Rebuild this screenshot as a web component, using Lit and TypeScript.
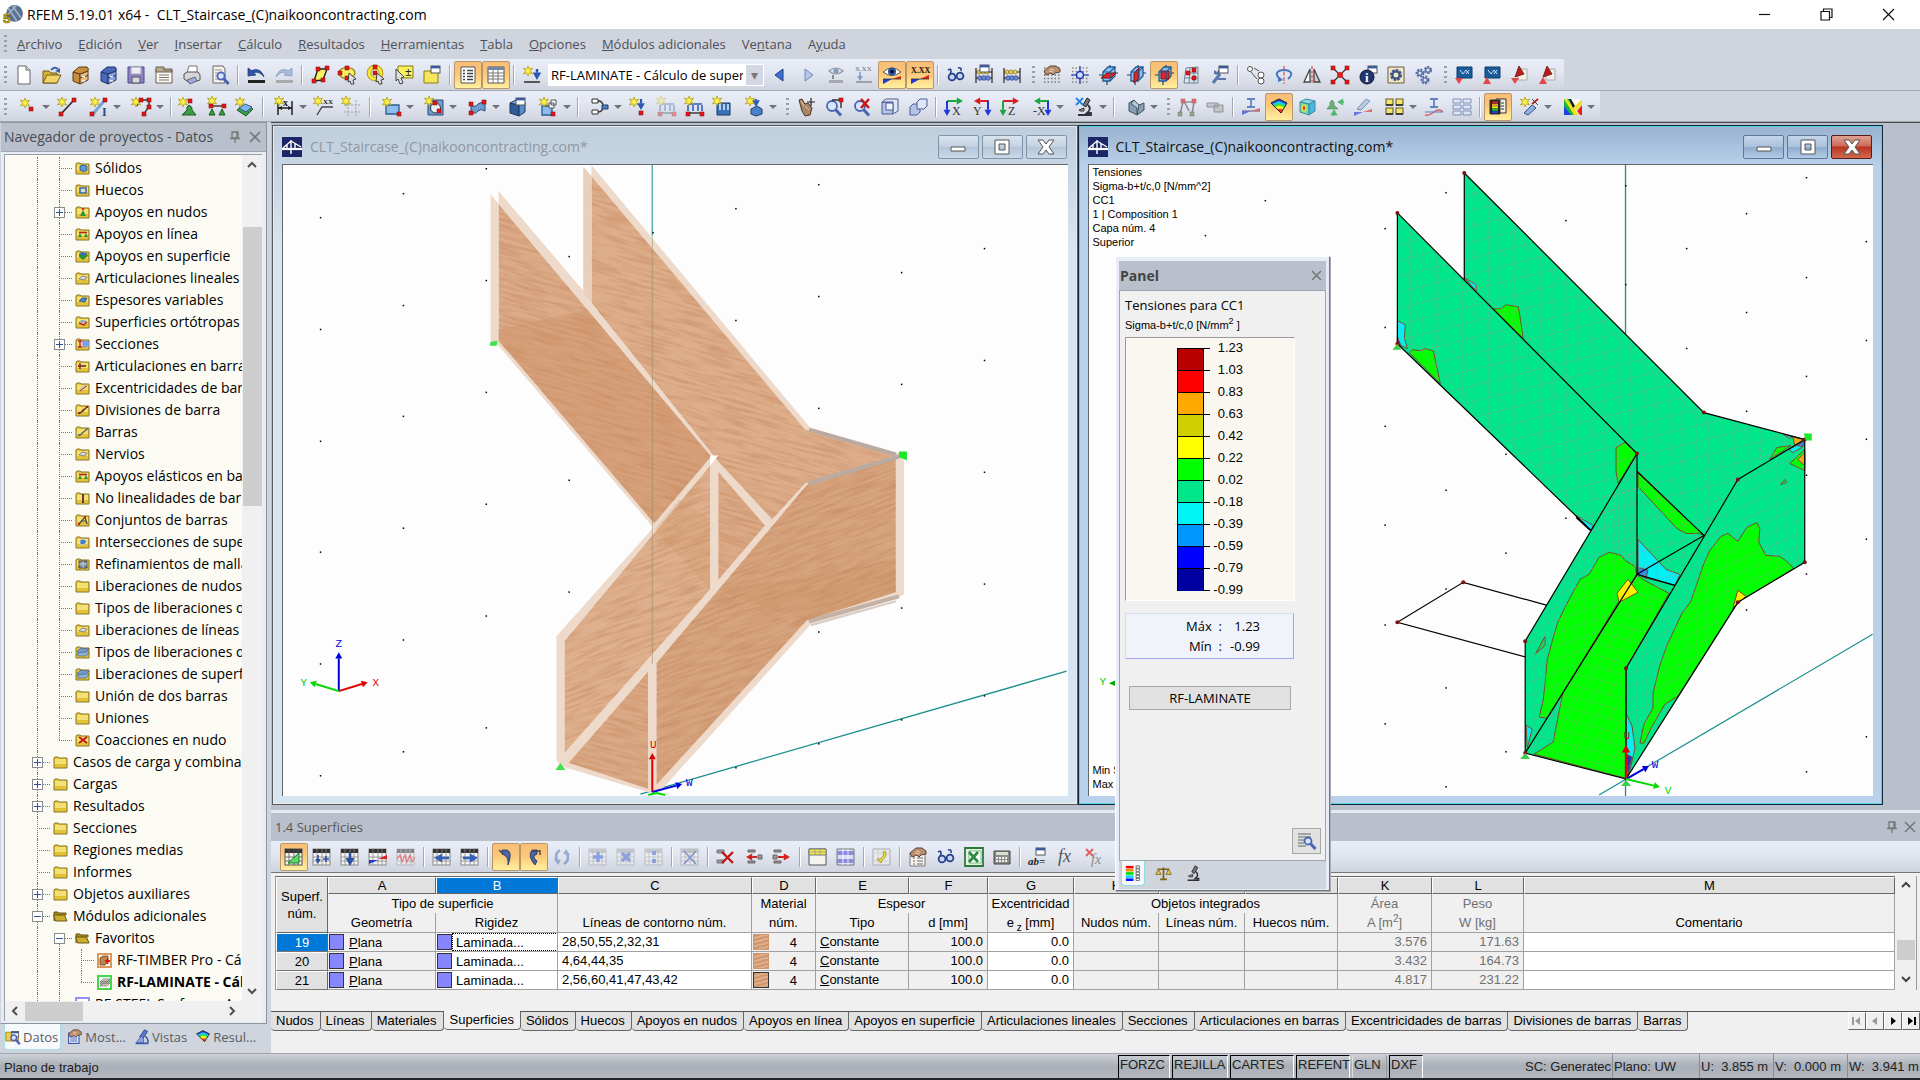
import { LitElement, html, svg, css, nothing } from 'lit';
import { customElement, property } from 'lit/decorators.js';
import { classMap } from 'lit/directives/class-map.js';

/* ---------- small drawing helpers ---------- */
const p = (d: string, f = 'none', s = 'none', w = 1) =>
  svg`<path d=${d} fill=${f} stroke=${s} stroke-width=${w}></path>`;
const ln = (d: string, s = '#222', w = 1.4) => p(d, 'none', s, w);
const star = (x = 5, y = 5) => svg`<path transform="translate(${x} ${y})"
  d="M0-5L1.3-1.8 4.6-3 2.4 0 4.6 3 1.3 1.8 0 5-1.3 1.8-4.6 3-2.4 0-4.6-3-1.3-1.8Z" fill="#fff04a" stroke="#a89600" stroke-width=".7"></path>`;
const nd = (x: number, y: number, c = '#e81414') =>
  svg`<rect x=${x - 2} y=${y - 2} width="4" height="4" fill=${c} stroke="#7a0a0a" stroke-width=".5"></rect>`;
const tx = (t: string, x: number, y: number, s = 9, c = '#222', b = '700', st = 'normal') =>
  svg`<text x=${x} y=${y} font-size=${s} fill=${c} font-weight=${b} font-style=${st} font-family="Liberation Serif, serif">${t}</text>`;
const arr = (x1: number, y1: number, x2: number, y2: number, c: string, w = 2) => {
  const a = Math.atan2(y2 - y1, x2 - x1), h = w * 2.2;
  const bx = x2 - h * 1.4 * Math.cos(a), by = y2 - h * 1.4 * Math.sin(a);
  const px = -Math.sin(a) * h * 0.8, py = Math.cos(a) * h * 0.8;
  return svg`<path d="M${x1} ${y1}L${bx} ${by}" stroke=${c} stroke-width=${w}></path>
    <path d="M${x2} ${y2}L${bx + px} ${by + py}L${bx - px} ${by - py}Z" fill=${c}></path>`;
};
const gridIcon = (c = '#555', head = '#333') => svg`
  <rect x="1" y="2" width="17" height="16" fill="#f4f4f2" stroke=${c}></rect>
  <rect x="1" y="2" width="17" height="4" fill=${head}></rect>
  <path d="M1 10H18M1 14H18M5 2V18M10 2V18M14 2V18" stroke=${c} stroke-width=".8"></path>`;
const miniWin = (x: number, y: number) => svg`<rect x=${x} y=${y} width="9" height="7" fill="#fff" stroke="#555"></rect>
  <rect x=${x} y=${y} width="9" height="2.4" fill="#3a5a9c"></rect>`;
const cabinet = (a: string, b: string, c: string) => svg`
  ${p('M3 7L10 9V19L3 16Z', a, c)}${p('M10 9L18 6V15L10 19Z', b, c)}${p('M3 7L9 2L17 2Q19 3 18 6L10 9Z', a, c)}
  ${ln('M10 13L18 10.500', c, 1)}${p('M12 11h3v1.500h-3zM12 15h3v1.500h-3z', '#eee')}`;
const glasses = svg`${p('M2 5Q5 3 5 6L4 11', 'none', '#25408c', 1.6)}${p('M12 3Q16 2 15 6', 'none', '#25408c', 1.6)}
  <circle cx="6" cy="12" r="3.400" fill="#c9d5ee" stroke="#25408c" stroke-width="1.800"></circle>
  <circle cx="14" cy="11" r="3.400" fill="#c9d5ee" stroke="#25408c" stroke-width="1.800"></circle>`;
const abacus = svg`${ln('M2 3V18M18 3V18', '#555', 1.6)}${ln('M2 7H18M2 13H18', '#222', 1)}
  ${[5, 9, 13].map(x => svg`<circle cx=${x} cy="7" r="2" fill="#ecd350" stroke="#86711a" stroke-width=".7"></circle>`)}
  ${[6, 10, 14].map(x => svg`<circle cx=${x} cy="13" r="2.300" fill="#6c8ad6" stroke="#243f8c" stroke-width=".7"></circle>`)}`;
const dots = (c = '#777') => svg`${[3, 6.5, 10, 13.5, 17].map(y => svg`<path d="M2 ${y}H19" stroke=${c} stroke-width="1.500" stroke-dasharray="1.500 2"></path>`)}`;
const hand = svg`${p('M2 6L8 1H14L18 4V7L13 8L11 10L9 8L4 10Z', '#b98f6e', '#5f4330', 1)}${ln('M8 4L12 5M7 6L11 7', '#ecd2b8', 1)}`;
const lens = (x = 9, y = 8, r = 5) => svg`<circle cx=${x} cy=${y} r=${r} fill="#d7e5fb" stroke="#4a64b4" stroke-width="1.800"></circle>
  <path d="M${x + r * 0.7} ${y + r * 0.7}L${x + r + 4} ${y + r + 4.5}" stroke="#4a64b4" stroke-width="3"></path>`;
const plane = (f: string) => svg`${p('M5 7L10 2H17V11L12 16H5Z', '#8fc2ee', '#1d5a94', 1.3)}${p('M1 10H5M17 8H20M9 16V20M12 2V0', 'none', '#1d4676', 1.2)}${p(f, '#e02626', '#801010')}
  ${ln('M5 7H12V16M12 7L17 2', '#1d5a94', 1.1)}`;
const micro = svg`${p('M12 1L15 3L11 10L8 8Z', '#777', '#222')}${p('M3 18H16V16H12Q17 12 13 8', 'none', '#333', 1.8)}${p('M4 13L9 11V14H5Z', '#999', '#333')}`;
const rainbow = svg`${p('M2 6L10 2L18 6L12 16Z', '#2040e0')}${p('M3 7L10 4L17 7L12 16Z', '#18c8f0')}${p('M4 8.500L10 6.500L16 8.500L12 16Z', '#38e040')}
  ${p('M6 10L10 8.500L15 10L12 16Z', '#f8f020')}${p('M8 12L13.500 12L12 16Z', '#f03020')}${p('M2 6L10 2L18 6L12 16Z', 'none', '#222', 1)}`;
const axes = (l: string, c1: string, c2: string, flip = false) => svg`
  ${flip ? arr(17, 4, 2, 4, c1, 2) : arr(3, 4, 19, 4, c1, 2)}${flip ? arr(16, 4, 16, 19, c2, 2) : arr(3, 4, 3, 19, c2, 2)}
  ${tx(l, flip ? 1 : 8, 18, 12, '#333', '400')}`;
const flag = (c: string, up: boolean) => svg`${c === 'b'
    ? p('M3 2H18V13H3Z', '#175b9c', '#0d3c6b') : p('M8 4H17V15H8Z', '#f2efe6', '#aaa')}
  ${c === 'b' ? ln('M6 5L9 9L12 5L15 9M12 9L15 5', '#cde2fa', 1) : p('M5 12L9 1L14 9Z', '#b81c1c', '#701010', 0.8)}
  ${up ? p('M5 12L9 19H1Z', '#e24848') : p('M1 13H9L5 19Z', '#e24848')}`;

const icons: Record<string, unknown> = {
  new: svg`${p('M4 1H12L16 5V19H4Z', '#fff', '#666')}${p('M12 1V5H16', '#ddd', '#666')}`,
  open: svg`${p('M1 18V6H7L9 8H15V18Z', '#d4b23a', '#6f5a12')}${p('M1 18L5 10H19L15 18Z', '#f0d468', '#6f5a12')}${p('M9 5Q13 1 16 4', 'none', '#3f64a4', 1.8)}${p('M18 3L18 8L13 6Z', '#3f64a4')}`,
  cab: cabinet('#c88f42', '#e6bd7c', '#5f3c10'),
  cabBlue: cabinet('#4a68b8', '#88a2e0', '#20336f'),
  save: svg`${p('M2 2H18V18H2Z', '#8a82c4', '#4b4690')}${p('M5 2H15V9H5Z', '#eeeaf6', '#aaa')}${p('M6 12H14V18H6Z', '#d8d8e0', '#555')}`,
  report: svg`${p('M2 4H18V18H2Z', '#fbf8ef', '#6c614e')}${p('M2 2H10V5H18V7H2Z', '#b7a98e', '#6c614e')}${ln('M5 10H15M5 12.500H15M5 15H15', '#777', 1)}`,
  print: svg`${p('M5 8L7 1H15L15 8Z', '#fff', '#777')}${p('M2 9L5 7H16L18 10V15L8 18L2 14Z', '#d4d4da', '#555')}${p('M5 15L13 12L15 16L8 19Z', '#9aaee0', '#555', 0.8)}`,
  preview: svg`${p('M3 1H13L15 4V18H3Z', '#f4f2ea', '#666')}${ln('M5 5H12M5 8H8M5 11H8M5 14H9', '#999', 1)}${lens(11, 11, 3.6)}`,
  undo: svg`${p('M2 3L2 11L10 10L7.500 8Q13 5.500 18 12Q15 2 5.500 5.500Z', '#2f55a8', '#1a3570', 0.7)}${p('M2 15H19V18H2Z', '#222')}`,
  redo: svg`${p('M18 3L18 11L10 10L12.500 8Q7 5.500 2 12Q5 2 14.500 5.500Z', '#a9bbdc', '#8094ba', 0.7)}${p('M2 15H19V18H2Z', '#aaa')}`,
  selPoly: svg`${p('M4 16L8 4H17L13 15Z', '#f8f060', '#222', 1.4)}${nd(8, 4)}${nd(4, 16)}${nd(13, 15)}${nd(17, 3)}`,
  selEll: svg`<ellipse cx="9" cy="8" rx="8" ry="5.500" fill="#f8f060" stroke="#8a7a10" stroke-width="1.200"></ellipse>${nd(9, 3)}${nd(2, 8)}${nd(9, 13)}${p('M11 8L18 14L15 15L16 19L13 19L12 16L10 17Z', '#ddd', '#333', 0.9)}`,
  selRing: svg`<circle cx="9" cy="8" r="6" fill="#f4f4f0" stroke="#a88a00" stroke-width="4.600"></circle><circle cx="9" cy="8" r="6" fill="none" stroke="#f8e838" stroke-width="3"></circle>${nd(9, 8)}${nd(9, 2)}${p('M11 8L18 14L15 15L16 19L13 19L12 16L10 17Z', '#ddd', '#333', 0.9)}`,
  selRect: svg`${p('M4 1H19V13H4Z', '#f8f060', '#8a7a10')}${tx('±', 11, 11, 12)}${p('M2 4L10 12L7 13L9 18L6 19L4 14L2 16Z', '#ddd', '#333', 0.9)}`,
  viewWin: svg`${p('M2 6H16V18H2Z', '#f4e85a', '#8a7a10')}${miniWin(9, 1)}`,
  list: svg`${p('M3 2H17V18H3Z', '#fff', '#555')}${ln('M5 5.500H7M9 5.500H15M5 8.500H7M9 8.500H15M5 11.500H7M9 11.500H15M5 14.500H7M9 14.500H15', '#444', 1.3)}`,
  table: svg`${p('M2 2H18V18H2Z', '#fff', '#555')}${p('M2 2H18V5H2Z', '#7385a8')}${ln('M2 8H18M2 11H18M2 14H18M7 5V18M12 5V18', '#777', 1)}`,
  newLoad: svg`${star(6, 6)}${arr(15, 4, 15, 15, '#2c56b4', 2.4)}${p('M2 16H18V18H2Z', '#555')}`,
  prev: p('M13 4V16L5 10Z', '#3c6fd4', '#1b3c80'),
  next: p('M7 4V16L15 10Z', '#b6c8ea', '#6f88b8'),
  viewLoad: svg`<g opacity=".5">${p('M3 15H17V18H3Z', '#777')}${ln('M7 14L7 10', '#333', 2)}${p('M3 6Q10 0 17 6Q10 12 3 6Z', '#dfe8f8', '#444', 1.2)}<circle cx="10" cy="6" r="2.600" fill="#2c4f9c"></circle></g>`,
  xxxLoad: svg`<g opacity=".5">${tx('X.XX', 1, 6, 7)}${arr(6, 7, 6, 16, '#2c56b4', 1.6)}${p('M2 16H18V18H2Z', '#666')}</g>`,
  eye: svg`${p('M1 7Q10-1 19 7Q10 14 1 7Z', '#fff', '#555')}<circle cx="10" cy="6.500" r="4" fill="#2c4f9c"></circle><circle cx="10" cy="6.500" r="1.600" fill="#000"></circle>
    ${p('M10 14L19 11V14Z', '#e02020')}${p('M1 14H10L1 19Z', '#2038d8')}${ln('M1 14H19', '#333', 0.8)}`,
  xxx: svg`${tx('X.XX', 1, 8, 8, '#111')}${p('M10 14L19 10V14Z', '#e02020')}${p('M1 14H10L1 19Z', '#2038d8')}${ln('M1 14H19', '#333', 0.8)}`,
  glasses, abacus,
  abacusWin: svg`${abacus}${miniWin(6, 0)}`,
  handGrid: svg`${dots()}${hand}`,
  gridNode: svg`${dots('#888')}${ln('M10 1V19M1 10H19', '#1d30b0', 1.2)}<circle cx="10" cy="10" r="3.500" fill="#cfe0ff" stroke="#1d30b0" stroke-width="1.500"></circle>`,
  planeA: plane('M3 13L9 8H18L13 13Z'), planeB: plane('M8 8L13 3V13L8 18Z'), planeC: plane('M7 6H15V14H7Z'),
  gridRed: svg`${p('M4 3L16 2V18H2Z', '#dfe8f0', '#6a8296')}${ln('M3 8H16M3 13H16M8 3L7 18M12 3V18', '#6a8296', 1)}${nd(6, 8)}${nd(12, 13)}${nd(12, 5)}`,
  wrenchWin: svg`${ln('M3 18L10 9', '#5877b0', 3)}${p('M8 10L4 9V5L7 7L9 4L12 7Z', '#5877b0')}${ln('M8 14H16', '#5877b0', 2)}${miniWin(9, 1)}`,
  copyO: svg`<circle cx="4" cy="4" r="2.500" fill="#fff" stroke="#555"></circle><circle cx="15" cy="10" r="3" fill="#fff" stroke="#555"></circle><circle cx="15" cy="16" r="3" fill="#fff" stroke="#555"></circle>${ln('M8 3L13 6', '#555', 1)}${ln('M5 7L11 14', '#555', 1)}`,
  rotate: svg`${svg`<path d="M10 1V19" stroke="#e03030" stroke-dasharray="4 1.500"></path>`}${p('M6 14Q0 9 5 6Q10 4 15 6Q20 9 14 14', 'none', '#4377c0', 2)}${p('M4 11L9 15L4 17Z', '#4377c0')}`,
  mirror: svg`${p('M8 4V17H2Z', '#fff', '#444', 1.3)}${p('M12 4V17H18Z', '#ccc', '#444', 1.3)}${svg`<path d="M10 1V19" stroke="#e02020" stroke-dasharray="3 1.500"></path>`}`,
  xnodes: svg`${ln('M3 3L17 17M17 3L3 17', '#333', 1.3)}${nd(3, 3)}${nd(17, 3)}${nd(3, 17)}${nd(17, 17)}<circle cx="10" cy="10" r="3" fill="#e02020"></circle>`,
  info: svg`${miniWin(10, 1)}<circle cx="9" cy="12" r="7" fill="#22356f" stroke="#0d1838"></circle>${tx('i', 7, 17, 13, '#fff')}`,
  gearBox: svg`${p('M2 2H18V18H2Z', '#f2e6c8', '#6a5a3a')}<circle cx="10" cy="10" r="4.500" fill="none" stroke="#3a5184" stroke-width="3" stroke-dasharray="2.400 1"></circle><circle cx="10" cy="10" r="3.500" fill="none" stroke="#3a5184" stroke-width="2"></circle>`,
  gears: svg`${[[6, 8, 3], [14, 5, 2.6], [11, 15, 3]].map(([x, y, r]) => svg`<circle cx=${x} cy=${y} r=${r} fill="none" stroke="#5a72a8" stroke-width="3" stroke-dasharray="1.800 1"></circle><circle cx=${x} cy=${y} r="2.200" fill="#dde4f4" stroke="#5a72a8" stroke-width="1.300"></circle>`)}`,
  impDown: flag('b', false), impUp: flag('b', true), redDown: flag('r', false), redUp: flag('r', true),

  node: svg`${star(7, 6)}${nd(13, 12)}`,
  line: svg`${ln('M4 17L17 3', '#333', 1.8)}${star(5, 5)}${nd(4, 17)}${nd(17, 3)}`,
  member: svg`${ln('M4 17L15 4', '#7aa4d8', 3)}${star(6, 5)}${nd(3, 17)}${nd(16, 3)}${tx('I', 13, 19, 12, '#2a4c90')}`,
  poly: svg`${ln('M5 9L8 3H17V9L12 17', '#333', 1.4)}${star(4, 5)}${nd(9, 3)}${nd(17, 3)}${nd(17, 10)}${nd(12, 17)}`,
  support: svg`${p('M10 8Q14 10 13 13L17 18H3L8 13Q7 10 10 8Z', '#3a9c44', '#1c5c24')}${star(4, 5)}${nd(11, 4)}`,
  lineSup: svg`${ln('M3 9H18', '#333')}${star(5, 4)}${nd(4, 9)}${nd(17, 9)}${p('M5 12L8 18H2ZM15 12L18 18H12Z', '#3a9c44', '#1c5c24')}`,
  surfSup: svg`${p('M2 13L9 8L18 12L11 19Z', '#3a9c44', '#1c5c24')}${p('M4 11L10 7L17 10L11 15Z', '#7fb4ee', '#2a5c96')}${star(5, 5)}`,
  dim: svg`${ln('M3 4V18M17 4V18M3 11H17', '#222', 1.5)}${p('M3 11L7 9V13ZM17 11L13 9V13Z', '#222')}${star(4, 4)}${tx('x', 8, 9, 10)}`,
  comment: svg`${ln('M3 18L8 10H19', '#444', 1.4)}${star(4, 4)}${tx('XX', 9, 7, 7)}`,
  guide: svg`<g opacity=".6"><path d="M6 3V19M14 3V19M2 8H19M2 15H19" stroke="#777" stroke-dasharray="2 1.500"></path></g>${star(4, 4)}`,
  surface: svg`${p('M4 8H17V17H4Z', '#8fbcec', '#2a5c96', 1.3)}${star(5, 5)}${nd(17, 17)}`,
  opening: svg`${p('M3 3H18V18H3Z', '#6f9cd0', '#2a4c80')}<circle cx="10.500" cy="11" r="5" fill="#e8eef6" stroke="#333"></circle>${star(4, 4)}${nd(10, 6)}${nd(14, 14)}`,
  curved: svg`${p('M3 8Q7 11 10 7Q13 4 17 7V14Q13 11 10 14Q7 18 3 15Z', '#6f9cd0', '#2a4c80')}${nd(3, 7)}${nd(16, 5)}${nd(3, 16)}`,
  solid: svg`${p('M3 6L12 8V19L3 16Z', '#2f5c98', '#183760')}${p('M12 8L18 5V15L12 19Z', '#5d8cc8', '#183760')}${p('M3 6L9 3H18L12 8Z', '#86aede', '#183760')}${miniWin(9, 1)}`,
  box: svg`${p('M3 9H13V18H3Z', '#8fbcec', '#2a5c96', 1.3)}${p('M10 6H15V11H10ZM12 3H17V8H12Z', '#fff', '#555')}${star(5, 5)}${nd(14, 17)}`,
  hinge: svg`${p('M2 2H8V6H2ZM2 13H8V17H2Z', '#fff', '#333')}${ln('M8 4Q13 4 13 9Q13 15 8 15', '#333')}${p('M12 8H18V12H12Z', '#4a80c8', '#20406c')}`,
  loadNode: svg`${star(5, 5)}${arr(12, 2, 12, 13, '#2c56b4', 2.2)}${nd(12, 16)}`,
  loadLine: svg`${ln('M3 8V14M8 8V14M13 8V14M17 8V14M3 7H17', '#3560b8', 1.6)}${ln('M3 16H17', '#333')}${star(4, 4)}${nd(3, 17)}${nd(17, 17)}`,
  loadSurf: svg`${p('M4 6H17V18H4Z', '#3a72b8', '#183760')}${ln('M7 7V13M11 7V13M15 7V13', '#d6e6fa', 1.6)}${star(4, 4)}`,
  loadSolid: svg`${p('M6 12L12 9L17 12V17L11 19L6 17Z', '#4a80c8', '#20406c')}${arr(11, 2, 11, 10, '#2c56b4', 2.2)}${star(5, 4)}`,
  handOrbit: svg`${p('M3 3L6 2L9 7L12 6L16 11L14 18L9 19L6 14Z', '#a98465', '#4f3828', 1)}${ln('M5 4L8 9M9 9L13 13', '#e2c4a8', 1)}${ln('M15 1V9M11 5H19', '#222', 1.2)}`,
  zoomWin: svg`${lens(8, 9, 5)}${ln('M8 3H17V11', '#333')}${nd(17, 3)}`,
  zoomX: svg`${lens(8, 9, 5)}${ln('M9 2L17 11M17 2L9 11', '#c81414', 2.4)}`,
  cubeWire: svg`${p('M2 5H13V17H2Z', '#b5c3e6', '#4a5c94')}${p('M2 5L6 2H18V14L13 17V5Z', '#dfe6f6', '#4a5c94')}${p('M6 6H13V13H6Z', '#eef2fa', '#4a5c94')}`,
  cubeMove: svg`${p('M2 10L5 7H12V15L9 18H2Z', '#b5c3e6', '#4a5c94')}${p('M9 5L12 2H19V9L16 12H9Z', '#dfe6f6', '#4a5c94')}`,
  axX: axes('X', '#1ca63c', '#2038d8'), axY: axes('Y', '#d81c24', '#2038d8', true), axZ: axes('Z', '#d81c24', '#1ca63c'), axNX: axes('-X', '#1ca63c', '#2038d8', true),
  micro, microX: svg`${micro}${ln('M1 1L8 8M8 1L1 8', '#2f86d8', 2)}`,
  solid3: svg`${p('M3 6L8 3L13 8L18 6V13L11 18L3 14Z', '#8a9fb4', '#3f5264')}${p('M8 3L13 8L11 18V11L5 7Z', '#b7c7d6', '#3f5264')}`,
  frame: svg`<g opacity=".6">${ln('M3 17L6 5H17L15 17M8 6L12 14', '#555', 1.6)}${nd(6, 4)}${nd(17, 4)}${nd(3, 17, '#3a9c44')}${nd(15, 17, '#3a9c44')}</g>`,
  drill: svg`<g opacity=".5">${p('M2 6H13V10H2ZM9 8H18V15H9Z', '#aaa', '#444')}</g>`,
  stress: svg`<g opacity=".75">${ln('M6 2H14M10 2V10M6 10H14', '#3a66b0', 1.8)}${ln('M1 14H19', '#333', 1)}${p('M10 14L19 11V14Z', '#e04040')}${p('M1 14H10L1 18Z', '#4050e0')}</g>`,
  rainbow,
  cubeRain: svg`${p('M3 5L12 7V18L3 15Z', '#70e0a0', '#3a8a9a')}${p('M12 7L18 4V14L12 18Z', '#48b8e0', '#3a8a9a')}${p('M3 5L9 2L18 4L12 7Z', '#8ad8f0', '#3a8a9a')}<ellipse cx="7" cy="11" rx="2.500" ry="3.500" fill="#f0e040"></ellipse><ellipse cx="7" cy="11" rx="1.200" ry="2" fill="#e03020"></ellipse>`,
  sups: svg`<g opacity=".7">${p('M7 3Q10 5 9 8L13 12H2L5 8Q4 5 7 3Z', '#3a9c44', '#1c5c24', 0.6)}${arr(9, 19, 9, 12, '#1ca63c', 2)}${arr(19, 5, 12, 5, '#1ca63c', 2)}</g>`,
  memStress: svg`<g opacity=".7">${p('M4 12L13 2L17 4L8 13Z', '#a8c0dc', '#5070a0')}${p('M10 15L19 12V15Z', '#e04040')}${p('M1 15H10L1 19Z', '#4050e0')}</g>`,
  wins: svg`${['M1 2H8V8H1Z', 'M11 2H18V8H11Z', 'M1 11H8V17H1Z', 'M11 11H18V17H11Z'].map(d => p(d, '#f4e470', '#6a5e28', 1.1))}${ln('M1 8H8M11 8H18M1 17H8M11 17H18', '#222', 1.4)}`,
  iWave: svg`<g opacity=".75">${ln('M6 2H14M10 2V10M6 10H14', '#3a66b0', 1.8)}${ln('M1 18Q5 19 10 15T19 15', '#e03030', 1.4)}${ln('M1 15H19', '#3a66b0', 1)}</g>`,
  tables: svg`<g opacity=".7">${p('M1 2H9V6H1ZM11 2H19V6H11ZM1 8H9V12H1ZM11 8H19V12H11ZM1 14H9V18H1ZM11 14H19V18H11Z', '#dfe6f6', '#5a6ea8')}</g>`,
  panel: svg`${p('M8 2H18V16H8Z', '#f4efe0', '#333')}${p('M2 3H12V17H2Z', '#222', '#333')}${['#e02020', '#f0a020', '#f0f020', '#20c020', '#2040e0'].map((c, i) => svg`<rect x="4" y=${4.5 + i * 2.4} width="6" height="2" fill=${c}></rect>`)}${ln('M13 6H16M13 9H16M13 12H16', '#333', 1)}`,
  wand: svg`${p('M4 16L12 8L16 11L8 18Z', '#8fb0e0', '#3a5080')}${star(5, 5)}${ln('M12 7L18 2', '#c02020', 1.8)}${ln('M12 2L18 8', '#444', 1)}`,
  bands: svg`${p('M1 2H19V18H1Z', '#f8f8f8')}${p('M1 2H6L14 18H1Z', '#18b83c')}${p('M1 9L8 18H1Z', '#2040e0')}${p('M1 2H4L16 18H11Z', '#f0e020')}${p('M6 2L8 2L12 9L10 11Z', '#181818')}${p('M11 10L19 2V7L13 14Z', '#f0e020')}${p('M14 14L19 8V18H17Z', '#e02020')}`,

  gTri: svg`${gridIcon()}${p('M4 16L15 6V16Z', '#5fd86a', '#1c7c2c')}`,
  gPlus: svg`${gridIcon('#888')}${arr(6, 8, 6, 17, '#2c50a8', 1.6)}${ln('M11 12H17M14 9V15', '#2c50a8', 1.6)}`,
  gDown: svg`${gridIcon('#888')}${arr(10, 6, 10, 19, '#2c50a8', 2.6)}`,
  gLine: svg`${gridIcon('#888')}${p('M10 12L19 8V12Z', '#e02020')}${p('M1 13H10L1 17Z', '#2038d8')}`,
  gWave: svg`<g opacity=".55">${gridIcon('#999')}${ln('M1 12L4 8L6 15L9 8L11 15L14 8L16 15L19 10', '#e03030', 1.3)}</g>`,
  gLeft: svg`${gridIcon('#888')}${arr(17, 11, 2, 11, '#3560b8', 2.6)}`,
  gRight: svg`${gridIcon('#888')}${arr(3, 11, 18, 11, '#3560b8', 2.6)}`,
  curve1: svg`${p('M6 3H11Q17 5 12 18Q13 9 6 7Z', '#4a64a4', '#20305c', 0.8)}${ln('M3 3L7 7', '#444')}`,
  curve2: svg`${p('M13 3H8Q3 9 11 18L13 14Q7 9 13 7Z', '#4a64a4', '#20305c', 0.8)}${ln('M9 4H16V8', '#444')}`,
  refresh: svg`<g opacity=".5">${p('M8 3Q2 7 5 14', 'none', '#5070b8', 2.6)}${p('M12 17Q18 13 15 6', 'none', '#5070b8', 2.6)}${p('M2 12L9 13L6 18ZM18 8L11 7L14 2Z', '#5070b8')}</g>`,
  cPlus: svg`<g opacity=".5">${gridIcon('#999', '#aaa')}${ln('M10 5V15M5 10H15', '#3c60d0', 3.4)}</g>`,
  cX: svg`<g opacity=".5">${gridIcon('#999', '#aaa')}${ln('M6 6L14 14M14 6L6 14', '#3c60d0', 3.4)}</g>`,
  cDiv: svg`<g opacity=".5">${gridIcon('#999', '#aaa')}${p('M8 4H12V8H8ZM8 12H12V16H8Z', '#3c60d0')}</g>`,
  cDel: svg`<g opacity=".6">${gridIcon('#999', '#aaa')}${ln('M4 4L16 17M16 4L4 17', '#4a66b8', 1.8)}</g>`,
  rDel: svg`${p('M1 3H8V6H1ZM1 13H8V16H1Z', '#999', '#777')}${ln('M6 5L17 16M17 5L6 16', '#c01818', 2.4)}`,
  rLeft: svg`${p('M4 3H11V5H4ZM4 14H11V16H4ZM14 8H18V12H14Z', '#999', '#666')}${arr(13, 10, 2, 10, '#d02020', 2)}`,
  rRight: svg`${p('M2 3H9V5H2ZM2 14H9V16H2ZM1 8H5V12H1Z', '#999', '#666')}${arr(6, 10, 18, 10, '#d02020', 2)}`,
  tYellow: svg`${p('M1 2H18V18H1Z', '#f4f4f0', '#555')}${p('M1 2H18V8H1Z', '#f0e850', '#777')}${ln('M7 2V8M12 2V8M1 5H18', '#998', 0.8)}`,
  tPurple: svg`${p('M1 2H18V18H1Z', '#dcdcf0', '#777')}${p('M1 4H18V8H1ZM1 12H18V16H1Z', '#8a8ae0')}${ln('M7 2V18M12 2V18', '#fff', 0.8)}`,
  note: svg`${p('M1 2H18V18H1Z', '#e8e8e8', '#aaa')}${ln('M1 6H18M1 14H18M6 2V18', '#ccc', 0.8)}${p('M13 4Q16 9 10 13L9 16L5 12L8 12Q13 9 11 5Z', '#f0e040', '#8a8010', 0.7)}`,
  handList: svg`${p('M2 6H17V19H2Z', '#f6f4ee', '#777')}${ln('M5 11H7M9 11H15M5 14H7M9 14H15M5 17H7M9 17H15', '#666', 1)}${hand}`,
  excel: svg`${p('M1 1H19V19H1Z', '#e6f2e6', '#2a7a3c', 1.8)}${p('M5 4H17V16H5Z', '#fff', '#5aa868', 0.8)}${ln('M5 5L14 15M14 5L5 15', '#2c8c48', 2.8)}`,
  calc: svg`${p('M2 4H18V17H2Z', '#8c8c8c', '#444')}${p('M4 5H16V8H4Z', '#d8e0d0')}<path d="M4 11H16M4 14H16" stroke="#eee" stroke-width="2" stroke-dasharray="2 1"></path>`,
  abeq: svg`${miniWin(8, 1)}${tx('ab=', 0, 18, 11, '#222', '700', 'italic')}`,
  fx: tx('fx', 2, 15, 18, '#555', '400', 'italic'),
  fxX: svg`${tx('fx', 7, 17, 14, '#888', '400', 'italic')}${ln('M2 2L9 9M9 2L2 9', '#e06060', 2)}`,
  scale: svg`${ln('M10 3V16M3 5H17M6 17H14', '#7a6414', 2)}${p('M1 11H7L4 5ZM13 11H19L16 5Z', '#e8cc50', '#7a6414')}`,
  legend: svg`${['#f00000', '#f09000', '#00d800', '#00d8f0', '#0010f0'].map((c, i) => svg`<rect x="1" y=${1 + i * 3.7} width="9" height="3" fill=${c}></rect><rect x="13" y=${1 + i * 3.7} width="4" height="2.600" fill="#fff" stroke="#444" stroke-width=".8"></rect>`)}`,
  details: svg`${ln('M1 3H14M1 6H14M1 9H8M1 12H7M1 15H9', '#666', 1.2)}${lens(11, 10, 3.5)}`,
  datos: svg`${p('M1 4H7L9 6H17V15H1Z', '#f0cc40', '#96761a')}${miniWin(8, 3)}${lens(11, 11, 3.5)}`,
  mostrar: svg`${p('M2 5H15V18H2Z', '#fff', '#3a5cb0', 1.5)}${ln('M4 10H13M4 12.500H13M4 15H13', '#3a5cb0', 1.4)}${hand}`,
  vistas: svg`${p('M13 1L17 3L11 12L7 10Z', '#5a78c8', '#24407c')}${p('M2 18H17Q19 13 14 9', 'none', '#3a5cb0', 2)}${p('M3 17L9 9L12 12V17Z', '#8ea6dc', '#3a5cb0')}`,
  app: svg`<circle cx="12" cy="9" r="8" fill="#5b718f"></circle>${ln('M6 4L14 16M10 2L18 13M5 11L14 1', '#9cb2cc', 1.6)}<text x="1" y="18" font-size="13" font-weight="700" fill="#f2c618" stroke="#6a5200" stroke-width=".6" font-family="Liberation Sans, sans-serif">5</text>`,
  bridge: svg`<rect width="20" height="20" fill="#1c2566"></rect>${ln('M0 12H20', '#fff', 2.2)}${ln('M1 11L9 4L19 10M9 3V17M13 6V11M5 8V11', '#fff', 1.4)}`,
};

const ico = (n: string, size = 20) =>
  html`<svg class="ico" width=${size} height=${size} viewBox="0 0 20 20" aria-hidden="true">${icons[n]}</svg>`;

/* Tool strip tokens: "|" separator, "*" pressed, "+" with drop-down, "!" disabled, "@" combo box */
const strip1 = [
  'new open cab cabBlue save report print preview | undo redo | selPoly selEll selRing selRect viewWin | *list *table | newLoad @ prev next viewLoad xxxLoad *eye *xxx | glasses abacusWin abacus',
  'handGrid gridNode planeA planeB *planeC gridRed wrenchWin | copyO rotate mirror xnodes info gearBox gears',
  'impDown impUp redDown redUp',
];
const strip2 = [
  '+node line +member +poly | support lineSup surfSup | +dim comment guide | +surface +opening +curved solid +box | +hinge loadNode !loadLine loadLine loadSurf +loadSolid',
  'handOrbit zoomWin zoomX cubeWire cubeMove | axX axY axZ +axNX +microX | +solid3',
  'frame drill | stress *rainbow cubeRain sups memStress +wins iWave tables | *panel +wand +bands',
];
const strip3 = '*gTri gPlus gDown gLine gWave | gLeft gRight | *curve1 *curve2 refresh | cPlus cX cDiv | cDel | rDel rLeft rRight | tYellow tPurple | note | handList glasses excel calc | abeq fx fxX';

@customElement('tool-strip')
class ToolStrip extends LitElement {
  @property() items = '';
  static styles = css`
    :host { display: block; }
    .ico { display: block; flex: none; overflow: visible; }
    .strip { display: flex; align-items: center; height: 100%; }
    .tool { display: flex; align-items: center; justify-content: center; width: 28px; height: 28px; padding: 0;
      border: 1px solid transparent; background: none; border-radius: 2px; }
    .tool.on { border-color: #b8976a; background: linear-gradient(#f7bd78, #fbc877 45%, #fff0a0); }
    .tool.off { opacity: .4; }
    .drop { width: 43px; gap: 4px; padding-left: 4px; }
    .drop::after { content: ''; border: 4px solid transparent; border-top-color: #70747c; border-bottom: 0; }
    .sep { width: 2px; height: 20px; margin: 0 3px; background: #a4a8b0; border-right: 1px solid #fff; box-sizing: border-box; }
    .combo { display: grid; grid-template-columns: 1fr 18px; width: 216px; height: 22px; margin: 0 2px; background: #fff; align-items: center; }
    .combo select { grid-area: 1 / 1; appearance: none; border: 0; background: none; min-width: 0; padding: 0 3px;
      font: 13px "Open Sans", sans-serif; color: #000; height: 22px; overflow: hidden; }
    .combo::after { content: '▾'; grid-area: 1 / 2; background: #d3d8e2; height: 20px; text-align: center; font: 14px/20px "DejaVu Sans", sans-serif; color: #777; margin-right: 1px; }
  `;
  render() {
    return html`<div class="strip" role="toolbar">${this.items.split(' ').map(t => {
      if (t === '|') return html`<span class="sep"></span>`;
      if (t === '@') return html`<label class="combo"><select aria-label="Caso de carga"><option>RF-LAMINATE - Cálculo de superficies</option></select></label>`;
      const n = t.replace(/^[*+!]/, '');
      return html`<button type="button" aria-label=${n} class=${classMap({ tool: true, on: t[0] === '*', drop: t[0] === '+', off: t[0] === '!' })}>${ico(n)}</button>`;
    })}</div>`;
  }
}

/* ---------- project tree ---------- */
type Row = [text: string, level: number, kind: string, exp?: string];
const rows: Row[] = [
  ['Sólidos', 2, 'cube'], ['Huecos', 2, 'hole'], ['Apoyos en nudos', 2, 'sup', '+'], ['Apoyos en línea', 2, 'supl'],
  ['Apoyos en superficie', 2, 'sups'], ['Articulaciones lineales', 2, 'plate'], ['Espesores variables', 2, 'wedge'],
  ['Superficies ortótropas', 2, 'ortho'], ['Secciones', 2, 'sec', '+'], ['Articulaciones en barras', 2, 'hinge'],
  ['Excentricidades de barras', 2, 'ecc'], ['Divisiones de barra', 2, 'div'], ['Barras', 2, 'bar'], ['Nervios', 2, 'plate'],
  ['Apoyos elásticos en barras', 2, 'supl'], ['No linealidades de barras', 2, 'nl'], ['Conjuntos de barras', 2, 'set'],
  ['Intersecciones de superficies', 2, 'inter'], ['Refinamientos de malla', 2, 'mesh'], ['Liberaciones de nudos', 2, ''],
  ['Tipos de liberaciones de líneas', 2, ''], ['Liberaciones de líneas', 2, 'plate'], ['Tipos de liberaciones de superficies', 2, 'layers'],
  ['Liberaciones de superficies', 2, 'layers'], ['Unión de dos barras', 2, ''], ['Uniones', 2, ''], ['Coacciones en nudo', 2, 'x', 'last'],
  ['Casos de carga y combinaciones', 1, '', '+'], ['Cargas', 1, '', '+'], ['Resultados', 1, '', '+'], ['Secciones', 1, ''],
  ['Regiones medias', 1, ''], ['Informes', 1, ''], ['Objetos auxiliares', 1, '', '+'], ['Módulos adicionales', 1, 'open', '-'],
  ['Favoritos', 2, 'open', '-first'], ['RF-TIMBER Pro - Cálculo', 3, 'timber'], ['RF-LAMINATE - Cálculo', 3, 'laminate', 'last'],
  ['RF-STEEL Surfaces - Análisis', 2, 'steel'],
];
const overlay: Record<string, unknown> = {
  cube: p('M5 5L8 4L12 5V9L9 11L5 9Z', '#5d94d4', '#24508c', 0.8),
  hole: p('M5 5H11V10H5Z', '#ddd', '#3f6aa8', 1.6),
  sup: svg`${p('M8 5L11 11H5Z', '#2c9438')}${p('M7 3H9V5H7Z', '#e02020')}`,
  supl: svg`${ln('M4 5.500H12', '#b02020', 1.6)}${p('M5 6L7 10H3ZM11 6L13 10H9Z', '#2c9438')}`,
  sups: svg`${p('M4 5L12 4L13 7L8 11L4 8Z', '#2c9438')}${p('M4 4L8 3L12 5L8 7Z', '#3f6ab0')}`,
  plate: p('M4 8L7 5L12 6L10 9Z', '#d4d8de', '#777', 0.8),
  wedge: p('M4 8L7 5L12 5L10 9Z', '#4a84cc', '#24508c', 0.8),
  ortho: svg`${p('M4 7L7 5L12 6L10 8Z', '#7fa8dc')}${ln('M4 8L9 10L12 7', '#c02020', 1.4)}`,
  sec: svg`${p('M7 4H14V9L8 11Z', '#7f9cf0')}${ln('M3 4H7M5 4V10M3 10H7', '#c02040', 1.4)}`,
  hinge: svg`${ln('M5 4V10M5 7H11', '#333', 1.3)}${p('M3 6H6V8H3Z', '#c02020')}`,
  ecc: svg`${ln('M4 10L11 4', '#bbb', 2)}${ln('M5 10L12 5', '#c02020', 0.9)}`,
  div: svg`${ln('M4 11L12 4', '#333', 1.3)}${p('M3 9H5V11H3ZM11 3H13V5H11ZM7 6.500H9V8.500H7Z', '#a02020')}`,
  bar: svg`${ln('M4 11L12 4', '#666', 1.6)}${p('M3 9H5V11H3ZM11 3H13V5H11Z', '#777')}`,
  nl: svg`${ln('M8 3V12', '#444', 2)}${ln('M8 5V10', '#c02020', 1)}`,
  set: svg`${ln('M4 11L10 4L12 11M6 8H11', '#444', 1.2)}${p('M9 3H11V5H9ZM3 10H5V12H3Z', '#c02020')}`,
  inter: p('M5 5L8 4L12 6L9 10L5 9Z', '#3f7cc4', '#ddd', 0.8),
  mesh: svg`${p('M4 4H12V11H4Z', '#7d8ea8', '#333', 0.8)}${ln('M4 7H12M8 4V11', '#ddd', 0.8)}`,
  layers: svg`${p('M2 9L6 6L14 7L11 11L3 11Z', '#8fb4dc', '#456', 0.6)}${p('M2 6L6 3L14 4L11 7L3 8Z', '#6f9ccc', '#456', 0.6)}`,
  x: ln('M4 4L12 10M12 4L4 10', '#c01818', 1.8),
};
const treeIcon = (k: string) => {
  if (k === 'timber' || k === 'laminate' || k === 'steel') {
    const c = { timber: '#e0965a', laminate: '#42d84a', steel: '#8f8ff4' }[k];
    return svg`<rect x="1" y="1" width="13" height="13" fill="#fff" stroke=${c} stroke-width="2"></rect>
      ${k === 'timber' ? svg`${p('M3 5L6 3H11V9L8 12H3Z', '#b98650', '#5f3c10', 0.8)}${ln('M8 8H13M10.500 5.500V11', '#e01818', 1.8)}` : nothing}
      ${k === 'laminate' ? svg`${p('M3 11L6 8H13L10 11ZM3 9L6 6H13L10 9ZM3 7L6 4H13L10 7Z', '#e8e8d0', '#444', 0.6)}` : nothing}`;
  }
  if (k === 'open') return svg`${p('M1 12V3H5L6 4H13V6', '#a88c1c', '#5c4c10', 0.9)}${p('M2.500 12L0.500 6H11.500L14 12Z', '#ccae2c', '#5c4c10', 0.9)}`;
  return svg`${p('M1 13V3L2 2H5L6 3H14V13Z', '#e6c83c', '#8a7424', 1)}${p('M2 4H13V12H2Z', '#f4e074')}${p('M2 9H13V12H2Z', '#e2c238')}${overlay[k] ?? nothing}`;
};

@customElement('project-tree')
class ProjectTree extends LitElement {
  static styles = css`
    :host { display: flex; flex-direction: column; flex: 1; min-height: 0; }
    .frame { flex: 1; min-height: 0; display: grid; grid-template: minmax(0, 1fr) 20px / minmax(0, 1fr) 20px;
      border: 1px solid #9a9da4; border-width: 1px 0 0 1px; margin: 2px 4px 2px 3px; background: #f0f0f0; }
    .tree { margin: 0; padding: 2px 0 0 21px; list-style: none; overflow: hidden; background: #fbfbf3; }
    .row { display: flex; align-items: center; height: 22px; white-space: nowrap; font: 14px/22px "Open Sans", sans-serif; color: #000; }
    .bold { font-weight: 700; }
    .cell { width: 22px; height: 22px; flex: none; display: grid; grid-template: 11px 11px / 11px 11px; }
    .cell::before { content: ''; grid-area: 1 / 2 / 3 / 3; border-left: 1px dotted #777; }
    .last::before { grid-area: 1 / 2 / 2 / 3; }
    .first::before { grid-area: 2 / 2 / 3 / 3; }
    .branch::after { content: ''; grid-area: 2 / 2 / 3 / 3; border-top: 1px dotted #777; margin-right: -2px; }
    .exp { grid-area: 1 / 1 / 3 / 3; place-self: center; width: 11px; height: 11px; padding: 0; border: 1px solid #8c8c8c; background: #fff; z-index: 1; display: grid; place-items: center; }
    .pic { margin: 0 5px; flex: none; }
    .vs { display: flex; flex-direction: column; align-items: center; }
    .hs { display: flex; align-items: center; grid-area: 2 / 1; }
    .arrow { width: 20px; height: 20px; flex: none; border: 0; padding: 0; background: none; display: grid; place-items: center; }
    .vs .thumb { width: 19px; flex: 0 0 33%; background: #cdcdcd; margin-top: 52px; }
    .vs .fill { flex: 1; }
    .hs .thumb { height: 19px; flex: 0 0 58px; background: #cdcdcd; margin-right: auto; }
  `;
  arrow(d: string, l: string) {
    return html`<button class="arrow" type="button" aria-label=${l}><svg width="12" height="12" viewBox="0 0 12 12"><path d=${d} fill="none" stroke="#505050" stroke-width="2"></path></svg></button>`;
  }
  render() {
    return html`<div class="frame">
      <ul class="tree">${rows.map(([t, lv, k, e = '']) => html`<li class="row ${k === 'laminate' ? 'bold' : ''}">
        ${Array.from({ length: lv }, (_, c) => html`<span class=${classMap({
          cell: true, branch: c === lv - 1, last: e === 'last' && c === lv - 1,
          first: e === '-first' && c === 1 })}>${c === lv - 1 && /^[+-]/.test(e)
            ? html`<button type="button" class="exp" aria-label="Expandir ${t}"><svg width="9" height="9" viewBox="0 0 9 9"><path d=${e[0] === '+' ? 'M1 4.500H8M4.500 1V8' : 'M1 4.500H8'} stroke="#33509c"></path></svg></button>` : nothing}</span>`)}
        <svg class="pic" width="15" height="15" viewBox="0 0 15 15">${treeIcon(k)}</svg><span>${t}</span></li>`)}</ul>
      <div class="vs">${this.arrow('M2 8L6 4L10 8', 'Subir')}<div class="thumb"></div><div class="fill"></div>${this.arrow('M2 4L6 8L10 4', 'Bajar')}</div>
      <div class="hs">${this.arrow('M8 2L4 6L8 10', 'Izquierda')}<div class="thumb"></div>${this.arrow('M4 2L8 6L4 10', 'Derecha')}</div>
    </div>`;
  }
}

/* ---------- model views ---------- */
const dotSet = (d: [number, number[]][]) => d.map(([x, ys]) => ys.map(y => svg`<rect x=${x} y=${y} width="1.500" height="1.500" fill="#000"></rect>`));
const mono = (t: string, x: number, y: number, c: string) =>
  svg`<text x=${x} y=${y} fill=${c} font-size="11" font-family="Liberation Mono, monospace" text-anchor="middle">${t}</text>`;

const woodFaces: [string, string, number][] = [
  ['499,204 712,457 655,524 499,341', '#dcab88', 16],
  ['592,176 806,430 897,456 806,484 773,520 719,462 592,303', '#deae8b', 16],
  ['808,485 897,459 897,593 808,621 657,786 657,664', '#d6a47e', -20],
  ['711,466 711,590 565,754 565,642', '#dfb08d', -20],
  ['719,472 766,526 719,581', '#daa985', 16],
  ['649,672 649,790 569,764', '#daa985', 14],
];
const woodScene = svg`
  <defs>
    <filter id="grain" x="0" y="0" width="100%" height="100%" color-interpolation-filters="sRGB">
      <feTurbulence type="fractalNoise" baseFrequency="0.03 0.36" numOctaves="3" seed="7"></feTurbulence>
      <feColorMatrix values="0 0 0 0 .70  0 0 0 0 .42  0 0 0 0 .25  0 0 0 2.4 -.95"></feColorMatrix>
    </filter>
    ${woodFaces.map(([pts], i) => svg`<clipPath id="w${i}"><polygon points=${pts}></polygon></clipPath>`)}
  </defs>
  <path d="M653 165V236" stroke="#5fb3b0" stroke-width="1.500"></path>
  <path d="M641 795L1068 672" stroke="#1a8f8b" stroke-width="1.300"></path>
  ${dotSet([[320, [217, 329, 441, 552, 664, 776]], [403, [193, 305, 416, 528, 640, 752]], [486, [168, 280, 392, 504, 616, 728]],
    [569, [256, 480, 592]], [653, [232]], [736, [208, 320, 768]], [819, [184, 296, 408, 632, 744]], [902, [272, 384, 608, 720]], [985, [248, 360, 472, 584, 696]]])}
  <polygon points="491,194 491,341 499,346 654,528 557,637 557,761 561,767 645,792 653,794 663,790 811,626 897,600 905,595 905,455 897,453 811,428 592,165 592,176 584,167 584,291 499,191 499,204" fill="#eedacb"></polygon>
  ${woodFaces.map(([pts, c, a], i) => svg`<g clip-path="url(#w${i})"><polygon points=${pts} fill=${c}></polygon>
    <g transform="rotate(${a} 690 480)"><rect x="380" y="60" width="640" height="860" filter="url(#grain)" opacity=".3"></rect></g></g>`)}
  <polygon points="499,330 588,310 712,457 655,524 499,341" fill="#c98c5c" opacity=".32"></polygon>
  <polygon points="655,530 711,590 711,520 680,500" fill="#c98c5c" opacity=".2"></polygon>
  <polygon points="720,590 800,580 897,560 897,593 808,621 755,605" fill="#c98c5c" opacity=".25"></polygon>
  <polygon points="584,167 592,176 592,303 584,293" fill="#e9ccb8" opacity=".8"></polygon>
  <path d="M810 430L897 455" stroke="#b9aba2" stroke-width="4"></path>
  <path d="M809 484L900 457" stroke="#b9aba2" stroke-width="4"></path>
  <path d="M810 622L900 597" stroke="#c4b1a5" stroke-width="4"></path>
  <path d="M812 626L897 602" stroke="#d8cdc6" stroke-width="2"></path>
  <path d="M653 236V665" stroke="#8f8a5c" stroke-width="1" opacity=".55"></path>
  <path d="M711 456L719 456L711 466Z" fill="#fff"></path>
  <path d="M900 452H908V461L904 459L900 458Z" fill="#18e828"></path>
  <path d="M491 342L498 341L497 346H490Z" fill="#3ee24a"></path>
  <path d="M561 764L566 771H556Z" fill="#3ee24a"></path>
  ${arr(339, 692, 339, 653, '#0000d8', 2)}${arr(339, 692, 368, 683, '#e00000', 2)}${arr(339, 692, 310, 683, '#00d800', 2)}
  ${mono('Z', 339, 648, '#0000d8')}${mono('X', 376, 687, '#e00000')}${mono('Y', 304, 687, '#00c800')}
  ${arr(653, 793, 653, 754, '#e00000', 2)}${arr(653, 793, 683, 785, '#0000e0', 2)}<path d="M649 796L657 794L666 796" stroke="#00e000" stroke-width="2" fill="none"></path>
  ${mono('U', 654, 749, '#e00000')}${mono('W', 690, 787, '#0000e0')}`;

const hatch = (x0: number, y0: number, x1: number, y1: number, m: number | null, gap: number) => {
  let d = '';
  if (m === null) { for (let x = x0; x <= x1; x += gap) d += `M${x} ${y0}V${y1}`; return d; }
  const h = m * (x1 - x0);
  for (let y = y0 - Math.max(h, 0); y <= y1 - Math.min(h, 0); y += gap) d += `M${x0} ${y}L${x1} ${y + h}`;
  return d;
};
const meshFaces: [string, string][] = [
  ['1464,173 1704,413 1805,440 1738,480 1704,536 1675,586 1637,575 1591,531 1397,344 1397,213 1464,281',
    hatch(1397, 165, 1805, 600, null, 13) + hatch(1397, 165, 1805, 600, 1, 30) + hatch(1397, 165, 1805, 600, -0.25, 16)],
  ['1637,454 1637,575 1525,754 1525,642', hatch(1525, 450, 1640, 760, null, 10) + hatch(1525, 450, 1640, 760, -0.35, 13)],
  ['1738,480 1805,440 1805,563 1738,603 1626,780 1626,669', hatch(1626, 430, 1806, 790, null, 10) + hatch(1626, 430, 1806, 790, -0.45, 13)],
  ['1637,576 1669,594 1626,669 1626,779 1525,754', hatch(1525, 570, 1680, 790, 0.26, 12) + hatch(1525, 570, 1680, 790, -1.65, 24)],
];
const G = '#00ff00', C = '#00f0f4', B = '#2a8cf0', Y = '#fff000', O = '#f0a818';
const zone = (pts: string, f: string) => svg`<polygon points=${pts} fill=${f} stroke="#7a4a2a" stroke-width="1"></polygon>`;
const resultScene = svg`
  <defs>${meshFaces.map(([pts], i) => svg`<clipPath id="m${i}"><polygon points=${pts}></polygon></clipPath>`)}</defs>
  <path d="M1625.500 165V336M1625.500 780V797" stroke="#1a8f8b" stroke-width="1.300"></path>
  <path d="M1599 796L1873 635" stroke="#1a8f8b" stroke-width="1.200"></path>
  ${dotSet([[1204, [235]], [1264, [200]], [1384, [228, 327, 426, 525, 625, 724]], [1445, [192, 490, 589, 688, 787]], [1505, [454, 553, 752]], [1565, [220, 518]],
    [1625, [185, 284]], [1686, [248, 348]], [1746, [213, 312, 411, 610]], [1806, [177, 277, 376, 475, 574, 772]], [1866, [241, 340, 439, 539, 737]]])}
  <path d="M1547 606L1463 583L1397 623L1526 658" fill="none" stroke="#000" stroke-width="1.200"></path>
  <polygon points="1464,173 1704,413 1805,440 1805,563 1738,603 1626,780 1525,754 1525,642 1591,531 1397,344 1397,213 1464,281" fill="#00e68a"></polygon>
  ${zone('1493,309 1501,309 1506,305 1518,307 1520,318 1523,339', G)}
  ${zone('1409,353 1412,350 1421,351 1424,349 1433,351 1440,384', G)}
  ${zone('1397,321 1405,325 1404,338 1407,349 1397,344', C)}${zone('1397,337 1401,347 1397,344', '#2030c0')}
  ${zone('1464,278 1476,285 1476,291', C)}${zone('1576,516 1593,526 1591,531', C)}
  ${zone('1616,448 1625,443 1637,454 1618,484 1616,472', G)}
  ${zone('1638,472 1704,536 1699,534 1686,534 1677,529 1638,487', G)}
  ${zone('1638,540 1666,570 1680,575 1675,586 1647,579 1638,575', C)}${zone('1638,568 1648,571 1646,579 1638,575', B)}
  ${zone('1637,576 1648,583 1669,594 1626,669 1626,779 1617,777 1534,755 1553,743 1563,692 1619,604', G)}
  ${zone('1609,553 1614,554 1621,556 1625,561 1635,567 1637,576 1617,605 1563,693 1554,709 1547,719 1539,718 1543,701 1545,684 1547,661 1552,642 1558,622 1569,600 1580,580 1589,575 1599,558', G)}
  ${zone('1728,534 1738,542 1747,528 1757,523 1760,529 1759,543 1766,556 1780,557 1787,562 1794,569 1738,603 1678,697 1665,705 1651,729 1644,744 1640,744 1644,725 1653,709 1653,694 1660,666 1667,646 1682,614 1691,602 1704,564 1710,551 1721,537', G)}
  ${zone('1770,460 1777,448 1791,446', G)}${zone('1790,464 1805,450 1805,471', G)}${zone('1798,460 1805,453 1805,466', O)}
  ${zone('1793,437 1805,440 1795,446', O)}${zone('1789,450 1805,441 1802,448 1793,453', C)}${zone('1797,446 1805,441 1803,447', B)}${zone('1784,435 1793,437 1790,439', C)}
  ${zone('1626,714 1632,727 1635,749 1630,771 1626,780', C)}${zone('1626,755 1632,758 1628,776', '#2030c0')}
  ${zone('1526,726 1532,730 1527,749', C)}
  ${zone('1535,655 1545,637 1545,646', '#20d060')}${zone('1781,485 1785,480 1787,483', '#20d060')}
  ${meshFaces.map(([, d], i) => svg`<g clip-path="url(#m${i})"><path d=${d} stroke="#a39a9e" stroke-width="1" stroke-dasharray="2 1.500" fill="none" opacity=".55"></path></g>`)}
  ${zone('1617,594 1628,580 1638,593 1619,603', Y)}${zone('1738,591 1746,597 1733,609', Y)}
  <path d="M1464 281V173L1704 413L1805 440L1738 480L1626 669V780L1738 603L1805 563V440M1397 344L1591 531M1397 344V213L1637 454L1525 642V754L1626 780M1637 454V575L1525 754M1637 575L1704 536M1637 575L1675 586M1637 472L1704 536M1590 531L1576 518" fill="none" stroke="#000" stroke-width="1.200"></path>
  ${[[1464, 173], [1704, 413], [1805, 440], [1738, 480], [1805, 563], [1397, 213], [1637, 454], [1397, 344], [1525, 642], [1525, 754], [1626, 669], [1463, 583], [1397, 623], [1738, 603]]
    .map(([x, y]) => svg`<circle cx=${x} cy=${y} r="2" fill="#7a1010"></circle>`)}
  <path d="M1804 434H1812V441H1806Z" fill="#18e828"></path>
  <path d="M1397 344L1401 350H1392ZM1525 754L1530 760H1520ZM1626 781L1631 787H1621Z" fill="#3ecc4a"></path>
  ${arr(1626, 780, 1626, 746, '#e00000', 2.4)}${arr(1626, 780, 1649, 767, '#0000e0', 2)}${arr(1626, 780, 1660, 788, '#00d800', 2)}
  ${mono('U', 1627, 740, '#e00000')}${mono('W', 1655, 769, '#0000e0')}${mono('V', 1668, 795, '#00d800')}
  ${mono('Y', 1102, 686, '#00c800')}<path d="M1108 684L1117 680V688Z" fill="#00a800"></path>`;

@customElement('model-window')
class ModelWindow extends LitElement {
  @property({ type: Boolean, reflect: true }) active = false;
  static styles = css`
    :host { display: flex; flex-direction: column; min-width: 0; min-height: 0; box-sizing: border-box; padding: 0 9px 8px;
      border: 1px solid #5a5a5a; outline: 1px solid #e8ecf2; outline-offset: -2px; background: linear-gradient(#bfcedd, #d7e4f2 120px); color: #9097a0; }
    :host([active]) { border-color: #0d2a38; outline-color: #58cfe0; background: linear-gradient(#98b2d0, #b9d1ea 40px); color: #111; }
    .ico { display: block; flex: none; }
    .bar { display: flex; align-items: center; gap: 5px; height: 38px; padding: 4px 1px 0 0; box-sizing: border-box; flex: none; }
    .name { flex: 1; margin-left: 3px; font: 14px/20px "Open Sans", sans-serif; }
    .ctl { width: 41px; height: 24px; padding: 0; margin-left: -2px; border: 1px solid #7f93ab; border-radius: 2px; display: grid; place-items: center;
      background: linear-gradient(#d9e4ef, #c2d0e0 50%, #b4c5d8 50%, #cbd9e8); }
    :host([active]) .ctl { border-color: #5c7898; background: linear-gradient(#c4d6ea, #a9c1dc 50%, #8fabcc 50%, #b2cbe6); }
    :host([active]) .shut { border-color: #5b1a14; background: linear-gradient(#e0a294, #cf6a58 45%, #b83420 50%, #d06a50); }
    .view { flex: 1; min-height: 0; position: relative; background: #fdfdfd; border-top: 1px solid #666; border-left: 1px solid #666; overflow: hidden; }
    .view svg { display: block; width: 100%; height: 100%; }
    .notes { position: absolute; left: 4px; top: 0; margin: 0; font: 11px/14px "Liberation Sans", sans-serif; color: #000; }
    .notes.low { top: auto; bottom: 5px; }
  `;
  render() {
    const a = this.active;
    return html`<div class="bar">${ico('bridge')}<span class="name">CLT_Staircase_(C)naikooncontracting.com*</span>
        <button class="ctl" type="button" aria-label="Minimizar"><svg width="18" height="16" viewBox="0 0 18 16"><path d="M2 8H16V12H2Z" fill="#fff" stroke="#555"></path></svg></button>
        <button class="ctl" type="button" aria-label="Maximizar"><svg width="18" height="16" viewBox="0 0 18 16"><path d="M2 1H16V15H2ZM6 5V11H12V5Z" fill="#fff" fill-rule="evenodd" stroke="#555"></path></svg></button>
        <button class="ctl shut" type="button" aria-label="Cerrar"><svg width="18" height="16" viewBox="0 0 18 16"><path d="M1 1H6L9 5L12 1H17L12 8L17 15H12L9 11L6 15H1L6 8Z" fill="#fff" stroke="#555"></path></svg></button>
      </div>
      <div class="view"><svg viewBox=${a ? '1089 165 784 632' : '284 165 784 632'} role="img" aria-label="Modelo de escalera">${a ? resultScene : woodScene}</svg>
        ${a ? html`<p class="notes">Tensiones<br>Sigma-b+t/c,0 [N/mm^2]<br>CC1<br>1 | Composition 1<br>Capa núm. 4<br>Superior</p>
          <p class="notes low">Min Sigma-b+t/c,0<br>Max Sigma-b+t/c,0</p>` : nothing}</div>`;
  }
}

/* ---------- colour scale panel ---------- */
const scaleColors = ['#b80000', '#ff0000', '#ffa800', '#d0d000', '#ffff00', '#00ff00', '#00e68a', '#00f6f6', '#0098ff', '#0000ff', '#0000a0'];
const scaleValues = ['1.23', '1.03', '0.83', '0.63', '0.42', '0.22', '0.02', '-0.18', '-0.39', '-0.59', '-0.79', '-0.99'];

@customElement('scale-panel')
class ScalePanel extends LitElement {
  static styles = css`
    :host { display: flex; flex-direction: column; box-sizing: border-box; padding: 4px 3px 1px; background: #e8ecf6; border: 1px solid #fff; border-right: 1px solid #70757e; border-bottom: 1px solid #70757e;
      font: 13px/18px "Liberation Sans", sans-serif; color: #000; box-shadow: 1px 1px 0 #a8adb6; }
    .ico { display: block; }
    .head { display: flex; justify-content: space-between; align-items: center; height: 30px; padding: 0 4px 0 1px; background: #b9c0cb; border-bottom: 1px solid #9da6b2; box-sizing: border-box;
      font: 700 14px/20px "Open Sans", sans-serif; color: #444; }
    .x { border: 0; padding: 0; background: none; height: 12px; line-height: 0; }
    .body { flex: 1; display: flex; flex-direction: column; align-items: flex-start; background: #f0f0f0; border: 1px solid #9da6b2; border-top: 0; padding: 5px 4px 6px 5px; }
    .t1 { font: 13px/18px "Open Sans", sans-serif; }
    .t2 { font: 11px/23px "Liberation Sans", sans-serif; }
    sup { font-size: 9px; line-height: 0; }
    .legend { display: flex; width: 170px; height: 264px; padding: 10px 0 0 51px; box-sizing: border-box; background: #faf7f0; border: 1px solid #999; border-right-color: #fff; border-bottom-color: #fff; }
    .bar { width: 27px; height: 243px; box-sizing: border-box; border: 1px solid #000; }
    .sw { height: 22px; box-sizing: border-box; border-bottom: 1px solid #000; }
    .sw:last-child { border: 0; }
    .ticks { width: 6px; }
    .ticks i { display: block; height: 21px; border-top: 1px solid #000; }
    .vals { width: 33px; text-align: right; line-height: 22px; margin-top: -11px; }
    .ext { width: 169px; box-sizing: border-box; margin-top: 12px; padding: 2px 33px; border: 1px solid #d6e0f4; border-right-color: #a4a4ec; border-bottom-color: #a4a4ec; background: #f0f4fa;
      font: 13px/20px "Open Sans", sans-serif; display: grid; grid-template-columns: 1fr auto 38px; text-align: right; }
    .go { width: 162px; height: 24px; margin: 27px 0 0 4px; border: 1px solid #a8a8a8; background: #e1e1e1; font: 13px "Open Sans", sans-serif; }
    .det { margin-top: auto; align-self: flex-end; width: 29px; height: 26px; padding: 0; display: grid; place-items: center; background: #e1e1e1; border: 1px solid #a8a8a8; }
    .tabs { display: flex; gap: 6px; height: 28px; padding: 0 2px; background: #d0d4dd; }
    .tab { width: 24px; height: 25px; padding: 0; border: 0; background: none; display: grid; place-items: center; }
    .tab.on { background: #f6f8fa; border: 1px solid #8fdde8; border-top: 0; border-radius: 0 0 4px 4px; }
  `;
  render() {
    return html`<div class="head"><span>Panel</span><button class="x" type="button" aria-label="Cerrar panel"><svg width="11" height="11" viewBox="0 0 11 11"><path d="M1 1L10 10M10 1L1 10" stroke="#777" stroke-width="1.500"></path></svg></button></div>
      <div class="body"><span class="t1">Tensiones para CC1</span><span class="t2">Sigma-b+t/c,0 [N/mm<sup>2</sup> ]</span>
        <div class="legend"><div class="bar">${scaleColors.map(c => html`<div class="sw" style="background:${c}"></div>`)}</div>
          <div class="ticks">${scaleValues.map(() => html`<i></i>`)}</div>
          <div class="vals">${scaleValues.map(v => html`<div>${v}</div>`)}</div></div>
        <div class="ext"><span>Máx</span><span>&nbsp; :</span><span>1.23</span><span>Mín</span><span>&nbsp; :</span><span>-0.99</span></div>
        <button class="go" type="button">RF-LAMINATE</button>
        <button class="det" type="button" aria-label="Detalles">${ico('details')}</button></div>
      <div class="tabs"><button class="tab on" type="button" aria-label="Escala">${ico('legend', 17)}</button><button class="tab" type="button" aria-label="Factores">${ico('scale', 17)}</button><button class="tab" type="button" aria-label="Filtro">${ico('micro', 17)}</button></div>`;
  }
}

/* ---------- surface table ---------- */
const data = [
  ['19', '28,50,55,2,32,31', '3.576', '171.63'],
  ['20', '4,64,44,35', '3.432', '164.73'],
  ['21', '2,56,60,41,47,43,42', '4.817', '231.22'],
];
const tabs = ['Nudos', 'Líneas', 'Materiales', 'Superficies', 'Sólidos', 'Huecos', 'Apoyos en nudos', 'Apoyos en línea', 'Apoyos en superficie',
  'Articulaciones lineales', 'Secciones', 'Articulaciones en barras', 'Excentricidades de barras', 'Divisiones de barras', 'Barras'];
const pin = html`<svg width="12" height="14" viewBox="0 0 12 14"><path d="M3 2H9V8H3ZM1 8.500H11M6 9V13M8 2V8" fill="none" stroke="#777" stroke-width="1.300"></path></svg>`;
const cross = html`<svg width="12" height="12" viewBox="0 0 12 12"><path d="M1 1L11 11M11 1L1 11" stroke="#777" stroke-width="1.600"></path></svg>`;

@customElement('surface-dock')
class SurfaceDock extends LitElement {
  static styles = css`
    :host { display: block; background: #f0f0f0; font: 13px/18px "Liberation Sans", sans-serif; color: #000; }
    .head { display: flex; align-items: center; gap: 6px; height: 29px; padding: 0 4px; background: #b9c0cb; border-top: 1px solid #e6eaf2; box-sizing: border-box; color: #555; }
    .head span { flex: 1; font: 13px/20px "Open Sans", sans-serif; }
    .hb { border: 0; background: none; padding: 0; line-height: 0; }
    .tools { height: 31px; padding-left: 9px; background: linear-gradient(#e9edf7, #e3e7f1 40%, #cfd4de); }
    .box { display: flex; border-top: 1px solid #777; padding: 3px 3px 0 4px; }
    table { flex: 1; width: 100%; border-collapse: separate; border-spacing: 0; table-layout: fixed; border-top: 1px solid #666; border-left: 1px solid #999; }
    th, td { box-sizing: border-box; padding: 0 4px; font-weight: 400; height: 19px; border-right: 1px solid #a0a0a0; border-bottom: 1px solid #a0a0a0; white-space: nowrap; overflow: hidden; line-height: 18px; }
    .let th { height: 17px; line-height: 15px; background: #e1e1e1; border: 1px solid; border-color: #fff #666 #666 #fff; padding: 0; }
    .let th.sel { background: #0078d7; color: #fff; }
    .grp th { height: 19px; line-height: 18px; border-bottom: 0; padding: 0; }
    .sub th { height: 20px; line-height: 18px; padding: 0; }
    .let th.corner { line-height: 17px; border-right-color: #666; }
    .dim { color: #707070; }
    .w { background: #fff; }
    .num { text-align: right; }
    .rh { background: #e1e1e1; border: 1px solid; border-color: #fff #666 #777 #fff; padding: 0; line-height: 16px; }
    .rh.sel { background: #0078d7; color: #fff; }
    .sw { padding: 0 0 0 1px; }
    .pair { display: flex; align-items: center; gap: 4px; height: 18px; }
    .pair i { width: 15px; height: 16px; flex: none; background: #8686ff; border: 1px solid #333; box-sizing: border-box; }
    .pair.wood i { background: repeating-linear-gradient(165deg, #cf9770 0 2px, #dfae88 2px 4px); border-color: #cf9770; width: 16px; }
    .pair.wood.edge i { border-color: #333; }
    .pair b { flex: 1; font-weight: 400; height: 16px; line-height: 17px; padding-left: 1px; box-sizing: border-box; }
    .pair.tight { gap: 1px; }
    .pair.tight b { padding-left: 3px; }
    .focus b { outline: 1px dotted #000; }
    .pair.wood b { text-align: right; padding-right: 18px; }
    .vs { width: 20px; display: flex; flex-direction: column; justify-content: space-between; align-items: center; margin-left: 1px; border-right: 1px solid #999; }
    .vs button { border: 0; padding: 0; width: 18px; height: 20px; background: none; }
    .vs i { width: 18px; height: 20px; background: #cdcdcd; margin-top: 34px; }
    .tabs { display: flex; margin-top: 21px; height: 41px; border-top: 1px solid #555; align-items: flex-start; }
    .tab { font: 13px/18px "Liberation Sans", sans-serif; padding: 0 6px 0 5px; height: 19px; color: #000; border: 1px solid #666; border-width: 0 1px 1px 0; background: #e1e1e1; border-radius: 0 0 4px 4px; white-space: nowrap; flex: none; }
    .tab.on { background: #f0f0f0; margin-top: -1px; padding: 0 6px; }
    .nav { margin-left: auto; display: flex; }
    .nav button { width: 18px; height: 18px; padding: 0; border: 1px solid; border-color: #fff #666 #666 #fff; background: #f0f0f0; display: grid; place-items: center; }
    sub, sup { font-size: 10px; line-height: 0; }
  `;
  render() {
    const chev = (d: string) => html`<svg width="12" height="12" viewBox="0 0 12 12"><path d=${d} fill="none" stroke="#444" stroke-width="2"></path></svg>`;
    const nav = (d: string, c: string, l: string) => html`<button type="button" aria-label=${l}><svg width="12" height="10" viewBox="0 0 12 10"><path d=${d} fill=${c}></path></svg></button>`;
    return html`<div class="head"><span>1.4 Superficies</span><button class="hb" type="button" aria-label="Fijar">${pin}</button><button class="hb" type="button" aria-label="Cerrar tabla">${cross}</button></div>
      <tool-strip class="tools" items=${strip3}></tool-strip>
      <div class="box"><table>
        <colgroup>${[52, 108, 122, 194, 64, 93, 79, 86, 85, 86, 93, 94, 92].map(w => html`<col style="width:${w}px">`)}<col></colgroup>
        <thead>
          <tr class="let"><th class="corner" rowspan="3">Superf.<br>núm.</th>${'ABCDEFGHIJKLM'.split('').map(l => html`<th class=${l === 'B' ? 'sel' : ''}>${l}</th>`)}</tr>
          <tr class="grp"><th colspan="2">Tipo de superficie</th><th></th><th>Material</th><th colspan="2">Espesor</th><th>Excentricidad</th><th colspan="3">Objetos integrados</th><th class="dim">Área</th><th class="dim">Peso</th><th></th></tr>
          <tr class="sub"><th>Geometría</th><th>Rigidez</th><th>Líneas de contorno núm.</th><th>núm.</th><th>Tipo</th><th>d [mm]</th><th>e<sub> z</sub> [mm]</th><th>Nudos núm.</th><th>Líneas núm.</th><th>Huecos núm.</th><th class="dim">A [m<sup>2</sup>]</th><th class="dim">W [kg]</th><th>Comentario</th></tr>
        </thead>
        <tbody>${data.map(([n, l, a, w], i) => html`<tr><th class="rh ${i ? '' : 'sel'}">${n}</th>
          <td class="sw"><div class="pair"><i></i><b><u>P</u>lana</b></div></td>
          <td class="sw w"><div class="pair tight ${i ? '' : 'focus'}"><i></i><b>Laminada...</b></div></td>
          <td class="w">${l}</td><td class="sw"><div class="pair wood ${i === 2 ? 'edge' : ''}"><i></i><b>4</b></div></td><td><u>C</u>onstante</td><td class="num">100.0</td><td class="num w">0.0</td>
          <td></td><td></td><td></td><td class="num dim">${a}</td><td class="num dim">${w}</td><td class="w"></td></tr>`)}</tbody>
      </table>
      <div class="vs"><button type="button" aria-label="Subir">${chev('M2 8L6 4L10 8')}</button><i></i><button type="button" aria-label="Bajar">${chev('M2 4L6 8L10 4')}</button></div></div>
      <div class="tabs">${tabs.map(t => html`<button type="button" class="tab ${t === 'Superficies' ? 'on' : ''}">${t}</button>`)}
        <div class="nav">${nav('M1 1H3V9H1ZM9 1V9L4 5Z', '#999', 'Primera')}${nav('M8 1V9L3 5Z', '#999', 'Anterior')}${nav('M4 1V9L9 5Z', '#000', 'Siguiente')}${nav('M3 1V9L8 5ZM9 1H11V9H9Z', '#000', 'Última')}</div></div>`;
  }
}

/* ---------- application shell ---------- */
const menu = ['_Archivo', '_Edición', '_Ver', '_Insertar', '_Cálculo', '_Resultados', '_Herramientas', '_Tabla', '_Opciones', '_Módulos adicionales', 'Ve_ntana', 'A_yuda'];

@customElement('app-root')
class AppRoot extends LitElement {
  static styles = css`
    :host { display: flex; flex-direction: column; height: 100vh; overflow: hidden; background: #d0d4dd; font: 14px/20px "Open Sans", sans-serif; color: #222; }
    .ico { display: block; flex: none; }
    .title { display: flex; align-items: center; gap: 4px; height: 29px; padding-left: 2px; background: #fff; color: #000; }
    .title .grow { flex: 1; font-weight: 400; margin: 0; font-size: 14px; white-space: pre; }
    .sys { width: 58px; height: 29px; border: 0; padding: 0; background: none; display: grid; place-items: center; }
    .title .sys:last-child { margin-right: 3px; }
    .menu { display: flex; align-items: center; gap: 16px; height: 30px; font-size: 13px; }
    .menu .grip { margin: 0 -6px 0 4px; }
    .menu a { color: #4c5059; text-decoration: none; }
    .bars { display: flex; height: 31px; border-bottom: 1px solid #a2a6b0; }
    .bars.second { height: 30px; }
    .second .band { padding-top: 2px; }
    .band { display: flex; align-items: center; padding-right: 2px; background: linear-gradient(#e9edf7, #e3e7f1 40%, #cfd4de); }
    .grip { width: 3px; height: 18px; margin: 0 3px 0 4px; background: repeating-linear-gradient(#9aa0aa 0 2px, transparent 2px 5px); }
    .main { flex: 1; min-height: 0; display: grid; grid-template-columns: 267px minmax(0, 1fr); gap: 4px; }
    .nav { display: flex; flex-direction: column; min-height: 0; }
    .dock { flex: 1; min-height: 0; display: flex; flex-direction: column; background: #e8ecf6; border: 1px solid #8f939c; border-left-color: #d0d4dd; }
    .nhead { display: flex; align-items: center; gap: 8px; height: 28px; padding: 0 5px 0 3px; background: #b9c0cb; border-bottom: 1px solid #9da6b2; color: #484c54; }
    .nhead span { flex: 1; font-size: 14px; white-space: nowrap; }
    .hb { border: 0; background: none; padding: 0; line-height: 0; }
    .ntabs { display: flex; height: 29px; padding: 0 4px; align-items: flex-start; }
    .nt { display: flex; align-items: center; gap: 2px; height: 26px; padding: 0 2px 0 0; margin-right: 6px; border: 0; background: none; font: 13px/20px "Open Sans", sans-serif; color: #585c66; white-space: nowrap; }
    .nt.on { background: #f8f9fb; border: 1px solid #a6dfe8; border-top: 0; border-radius: 0 0 4px 4px; }
    .right { position: relative; display: flex; flex-direction: column; min-height: 0; }
    .mdi { flex: 1; min-height: 0; display: grid; grid-template-columns: minmax(0, 1fr) minmax(0, 1fr); padding: 2px 37px 5px 1px; background: #b9c0cb; border-top: 1px solid #4a4a4a; border-bottom: 2px solid #e4e8ef; }
    .float { position: absolute; left: 844px; top: 134px; width: 215px; height: 635px; z-index: 2; }
    .status { display: flex; height: 24px; align-items: center; background: linear-gradient(#cfd2d8, #a9aeb7 50%, #b4b8c0); border-top: 1px solid #a0a4aa; border-bottom: 2px solid #26262a;
      font: 13px/18px "Liberation Sans", sans-serif; color: #222; padding-left: 4px; white-space: nowrap; }
    .grow { flex: 1; }
    .status .grow { padding-top: 3px; }
    .flags { display: flex; gap: 2px; height: 24px; padding-top: 1px; box-sizing: border-box; }
    .flags button { font: 13px/18px "Liberation Sans", sans-serif; color: #222; padding: 0 1px 4px; box-sizing: border-box; background: none; border: 1px solid; border-color: #000 #fff #888 #000; border-width: 1px 1px 0; text-align: left; }
    .flags .up { border-color: #ccc #999 #888 #ddd; }
    .panes { display: flex; height: 24px; line-height: 26px; margin-left: 101px; }
    .panes span { border-left: 1px solid #888c94; padding: 0 1px; box-sizing: border-box; overflow: hidden; white-space: pre; }
    .panes span:first-child { border: 0; }
  `;
  bars(list: string[], second = false) {
    return html`<div class="bars ${second ? 'second' : ''}">${list.map(s => html`<div class="band"><span class="grip"></span><tool-strip items=${s}></tool-strip></div>`)}</div>`;
  }
  render() {
    const flags: [string, number][] = [['FORZC', 52], ['REJILLA', 56], ['CARTES', 64], ['REFENT', 54], ['GLN', 35], ['DXF', 34]];
    const panes: [string, number][] = [['SC: Generatec', 88], ['Plano: UW', 87], ['U:  3.855 m', 74], ['V:  0.000 m', 74], ['W:  3.941 m', 73]];
    return html`
      <header class="title">${ico('app', 21)}<h1 class="grow">RFEM 5.19.01 x64 -  CLT_Staircase_(C)naikooncontracting.com</h1>
        ${[['Minimizar ventana', 'M1 6.500H12'], ['Restaurar ventana', 'M1 3.500H9.500V12H1ZM3.500 3V1H12V9.500H10'], ['Cerrar ventana', 'M1 1L12 12M12 1L1 12']].map(([l, d]) =>
          html`<button class="sys" type="button" aria-label=${l}><svg width="13" height="13" viewBox="0 0 13 13"><path d=${d} fill="none" stroke="#111" stroke-width="1.200"></path></svg></button>`)}
      </header>
      <nav class="menu"><span class="grip"></span>${menu.map(m => { const i = m.indexOf('_'); return html`<a href="#">${m.slice(0, i)}<u>${m[i + 1]}</u>${m.slice(i + 2)}</a>`; })}</nav>
      ${this.bars(strip1)}${this.bars(strip2, true)}
      <main class="main">
        <aside class="nav"><div class="dock"><div class="nhead"><span>Navegador de proyectos - Datos</span><button class="hb" type="button" aria-label="Fijar">${pin}</button><button class="hb" type="button" aria-label="Cerrar navegador">${cross}</button></div>
          <project-tree></project-tree></div>
          <div class="ntabs">${[['datos', 'Datos'], ['mostrar', 'Most...'], ['vistas', 'Vistas'], ['rainbow', 'Resul...']].map(([n, l], i) =>
            html`<button type="button" class="nt ${i ? '' : 'on'}">${ico(n, 16)}<span>${l}</span></button>`)}</div></aside>
        <section class="right">
          <div class="mdi"><model-window></model-window><model-window active></model-window></div>
          <surface-dock></surface-dock>
          <scale-panel class="float"></scale-panel>
        </section>
      </main>
      <footer class="status"><span class="grow">Plano de trabajo</span>
        <div class="flags">${flags.map(([f, w]) => html`<button type="button" class=${f === 'GLN' ? 'up' : ''} style="width:${w}px">${f}</button>`)}</div>
        <div class="panes">${panes.map(([t, w]) => html`<span style="width:${w}px">${t}</span>`)}</div></footer>`;
  }
}
